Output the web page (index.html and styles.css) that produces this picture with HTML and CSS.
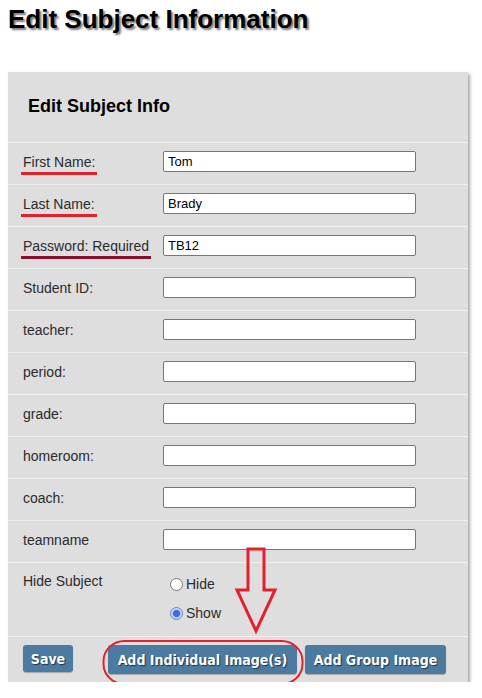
FILE: index.html
```html
<!DOCTYPE html>
<html>
<head>
<meta charset="utf-8">
<link rel="stylesheet" href="styles.css">
</head>
<body>
<h1 class="page-title">Edit Subject Information</h1>
<div class="panel">
  <h2 class="panel-title">Edit Subject Info</h2>
  <div class="row"><label class="label"><span class="mark mark-red">First Name:</span></label><input class="field" type="text" value="Tom"></div>
  <div class="row"><label class="label"><span class="mark mark-red">Last Name:</span></label><input class="field" type="text" value="Brady"></div>
  <div class="row"><label class="label"><span class="mark mark-dark">Password: Required</span></label><input class="field" type="text" value="TB12"></div>
  <div class="row"><label class="label">Student ID:</label><input class="field" type="text"></div>
  <div class="row"><label class="label">teacher:</label><input class="field" type="text"></div>
  <div class="row"><label class="label">period:</label><input class="field" type="text"></div>
  <div class="row"><label class="label">grade:</label><input class="field" type="text"></div>
  <div class="row"><label class="label">homeroom:</label><input class="field" type="text"></div>
  <div class="row"><label class="label">coach:</label><input class="field" type="text"></div>
  <div class="row"><label class="label">teamname</label><input class="field" type="text"></div>
  <div class="row row-radio">
    <span class="label">Hide Subject</span>
    <div class="radios">
      <label class="opt"><input class="radio" type="radio" name="hide">Hide</label>
      <label class="opt"><input class="radio" type="radio" name="hide" checked>Show</label>
    </div>
  </div>
  <div class="actions">
    <button class="btn btn-save" type="button">Save</button>
    <button class="btn btn-ind" type="button">Add Individual Image(s)</button>
    <button class="btn btn-grp" type="button">Add Group Image</button>
  </div>
</div>
<svg class="annot" width="482" height="698" viewBox="0 0 482 698" xmlns="http://www.w3.org/2000/svg">
  <polygon points="248,549 264,549 264,590 275,590 256,631 237,590 248,590" fill="none" stroke="#e3202b" stroke-width="3" stroke-linejoin="miter"/>
  <rect x="103.5" y="641" width="199" height="43" rx="21" ry="20" fill="none" stroke="#e3202b" stroke-width="2"/>
</svg>
</body>
</html>
```
FILE: styles.css
```css
html, body {
  margin: 0;
  padding: 0;
}
body {
  position: relative;
  padding: 0 8px;
  font-family: "Liberation Sans", Arial, sans-serif;
  color: #000;
  background: #fff;
}
.page-title {
  margin: 3px 0 0 0;
  font-size: 26px;
  line-height: 32px;
  font-weight: bold;
  text-shadow: 2px 2px 2px #7a7a7a;
}
.panel {
  margin-top: 37px;
  width: 460px;
  background: #dedede;
  box-shadow: 2px 2px 3px rgba(0, 0, 0, 0.35);
}
.panel-title {
  margin: 0;
  padding: 24px 0 26px 20px;
  font-size: 18px;
  line-height: 20px;
  font-weight: bold;
}
.row {
  display: flex;
  align-items: center;
  height: 41px;
  box-sizing: content-box;
  padding: 0 0 0 15px;
  border-top: 1px solid #efefef;
}
.label {
  width: 140px;
  flex: none;
  font-size: 14px;
  line-height: 21px;
  color: #2b2b2b;
  margin-top: -3px;
}
.mark {
  position: relative;
}
.mark::after {
  content: "";
  position: absolute;
  left: -2px;
  right: -2px;
  bottom: -5px;
  height: 3px;
}
.mark-red::after {
  background: #e0222c;
}
.mark-dark::after {
  background: #8a0f2e;
}
.field {
  width: 253px;
  height: 21px;
  box-sizing: border-box;
  margin: -4px 0 0 0;
  padding: 0 4px;
  border: 1px solid #767676;
  border-radius: 2px;
  background: #fff;
  font-family: "Liberation Sans", Arial, sans-serif;
  font-size: 13px;
  color: #000;
}
.row-radio {
  height: 73px;
  align-items: flex-start;
}
.row-radio .label {
  margin-top: 8px;
}
.radios {
  display: flex;
  flex-direction: column;
  padding: 6px 0 0 7px;
}
.opt {
  display: flex;
  align-items: center;
  height: 28px;
  font-size: 14px;
  color: #2b2b2b;
  padding-top: 1px;
}
.radio {
  appearance: none;
  -webkit-appearance: none;
  width: 13px;
  height: 13px;
  margin: 0 3px 0 0;
  border: 1px solid #767676;
  border-radius: 50%;
  background: #fff;
  box-sizing: border-box;
}
.radio:checked {
  border-color: #5a84d8;
  background: radial-gradient(circle, #3d6ee0 0, #3d6ee0 3.2px, #c9d8f4 4.2px, #c9d8f4 100%);
}
.actions {
  display: flex;
  align-items: flex-start;
  height: 46px;
  padding: 8px 0 0 15px;
  box-sizing: border-box;
  border-top: 1px solid #efefef;
}
.btn {
  height: 29px;
  padding: 0;
  border: none;
  border-radius: 3px;
  background: #4b7ba1;
  color: #fff;
  font-family: "DejaVu Sans Condensed", "DejaVu Sans", sans-serif;
  font-stretch: condensed;
  font-weight: bold;
  font-size: 14px;
  text-shadow: 1px 1px 1px #1d3447;
  box-shadow: 0 1px 1px rgba(0, 0, 0, 0.25);
}
.btn-save {
  height: 27px;
  width: 50px;
}
.btn-ind {
  margin-left: 35px;
  width: 189px;
}
.btn-grp {
  margin-left: 8px;
  width: 141px;
}
.annot {
  position: absolute;
  top: 0;
  left: 0;
  pointer-events: none;
}
```
